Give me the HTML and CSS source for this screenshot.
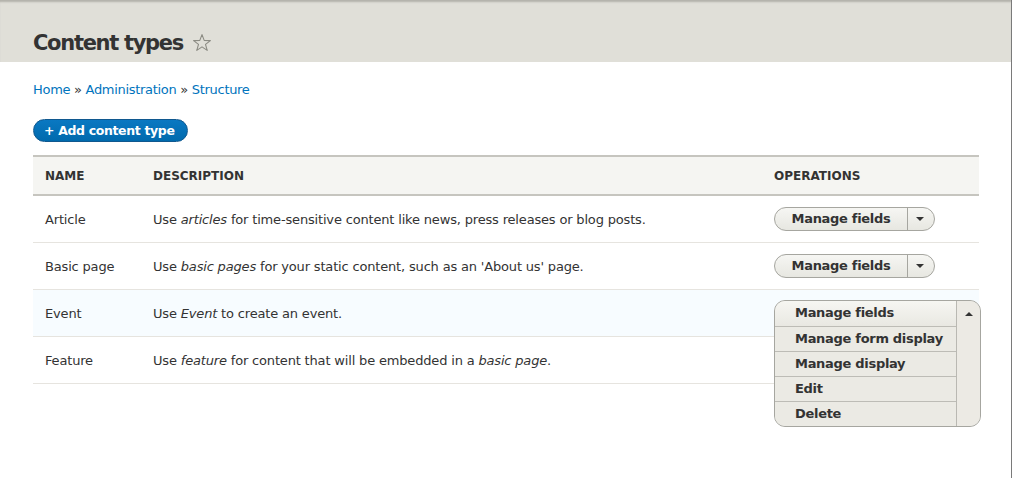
FILE: index.html
```html
<!DOCTYPE html>
<html>
<head>
<meta charset="utf-8">
<link rel="stylesheet" href="styles.css">
</head>
<body>
<div class="page">
  <header class="page-header">
    <h1 class="title">Content types <span class="star"><svg width="20" height="20" viewBox="0 0 20 20"><path d="M10 1.6 L12.2 7.4 L18.4 7.6 L13.5 11.4 L15.2 17.4 L10 13.9 L4.8 17.4 L6.5 11.4 L1.6 7.6 L7.8 7.4 Z" fill="none" stroke="#8b8b83" stroke-width="1.1" stroke-linejoin="round"/></svg></span></h1>
  </header>
  <main class="content">
    <nav class="breadcrumb"><a href="#">Home</a> » <a href="#">Administration</a> » <a href="#">Structure</a></nav>
    <div class="actions"><a class="btn-primary" href="#">+ Add content type</a></div>
    <table class="types">
      <thead>
        <tr><th class="c-name">Name</th><th class="c-desc">Description</th><th class="c-ops">Operations</th></tr>
      </thead>
      <tbody>
        <tr>
          <td>Article</td>
          <td>Use <em>articles</em> for time-sensitive content like news, press releases or blog posts.</td>
          <td><div class="dropbutton"><span class="db-main">Manage fields</span><span class="db-toggle"><i class="arrow-down"></i></span></div></td>
        </tr>
        <tr>
          <td>Basic page</td>
          <td>Use <em>basic pages</em> for your static content, such as an 'About us' page.</td>
          <td><div class="dropbutton"><span class="db-main">Manage fields</span><span class="db-toggle"><i class="arrow-down"></i></span></div></td>
        </tr>
        <tr class="hover">
          <td>Event</td>
          <td>Use <em>Event</em> to create an event.</td>
          <td class="ops-open">
            <div class="db-open">
              <ul class="db-list">
                <li>Manage fields</li>
                <li>Manage form display</li>
                <li>Manage display</li>
                <li>Edit</li>
                <li>Delete</li>
              </ul>
              <span class="db-open-toggle"><i class="arrow-up"></i></span>
            </div>
          </td>
        </tr>
        <tr>
          <td>Feature</td>
          <td>Use <em>feature</em> for content that will be embedded in a <em>basic page</em>.</td>
          <td></td>
        </tr>
      </tbody>
    </table>
  </main>
</div>
</body>
</html>
```
FILE: styles.css
```css
html, body {
  margin: 0;
  padding: 0;
  background: #fff;
}
body {
  font-family: "DejaVu Sans", Verdana, sans-serif;
  font-size: 13px;
  letter-spacing: -0.17px;
  color: #333;
  width: 1012px;
  height: 478px;
  overflow: hidden;
}
.page {
  border-right: 1px solid #7a7a7a;
  height: 478px;
  box-sizing: border-box;
}
.page-header {
  background: #e0dfd8;
  height: 62px;
  box-sizing: border-box;
  padding: 29px 0 0 33px;
  box-shadow: inset 0 3px 2px -1px #b3b2ab;
}
.title {
  margin: 0;
  font-size: 21px;
  font-weight: bold;
  color: #333;
  line-height: 28px;
  display: flex;
  align-items: center;
  letter-spacing: -1.3px;
}
.star {
  display: inline-flex;
  margin-left: 9px;
  margin-top: -1px;
}
.content {
  padding: 19px 33px 0 33px;
}
.breadcrumb {
  line-height: 18px;
  color: #333;
  letter-spacing: -0.3px;
}
.breadcrumb a {
  color: #0074bd;
  text-decoration: none;
}
.actions {
  margin-top: 20px;
  display: flex;
}
.btn-primary {
  display: inline-block;
  background: linear-gradient(#0a78c2, #006aad);
  color: #fff;
  font-weight: bold;
  text-decoration: none;
  font-size: 12.5px;
  letter-spacing: -0.35px;
  line-height: 19px;
  padding: 1px 12px 1px 10px;
  border: 1px solid #10588f;
  border-radius: 12px;
}
.types {
  margin-top: 13px;
  width: 946px;
  border-collapse: collapse;
}
.types thead tr {
  background: #f5f5f2;
  border-top: 2px solid #c6c5bf;
  border-bottom: 2px solid #c6c5bf;
}
.types th {
  text-align: left;
  font-size: 12px;
  font-weight: bold;
  text-transform: uppercase;
  height: 37px;
  padding: 0 12px;
  color: #333;
  letter-spacing: 0;
}
.c-name { width: 84px; }
.c-desc { width: 597px; }
.types tbody tr {
  border-bottom: 1px solid #e6e4df;
}
.types td {
  height: 46px;
  padding: 0 12px;
  vertical-align: middle;
}
.types em {
  font-style: italic;
}
.types tr.hover td {
  background: #f7fcff;
}
.dropbutton {
  display: inline-flex;
  height: 24px;
  border: 1px solid #a6a6a0;
  border-radius: 12px;
  background: linear-gradient(#f6f6f3, #e7e7e1);
  box-sizing: border-box;
  overflow: hidden;
}
.db-main {
  width: 132px;
  text-align: center;
  font-weight: bold;
  line-height: 22px;
  border-right: 1px solid #a6a6a0;
  color: #333;
  letter-spacing: -0.3px;
}
.db-toggle {
  width: 26px;
  display: flex;
  align-items: center;
  justify-content: center;
}
.arrow-down {
  width: 0; height: 0;
  border-left: 4px solid transparent;
  border-right: 4px solid transparent;
  border-top: 4px solid #333;
  margin-left: -3px;
}
.arrow-up {
  width: 0; height: 0;
  border-left: 4px solid transparent;
  border-right: 4px solid transparent;
  border-bottom: 4px solid #333;
}
.ops-open {
  position: relative;
}
.db-open {
  position: absolute;
  left: 12px;
  top: 10px;
  width: 207px;
  display: flex;
  border: 1px solid #a6a6a0;
  border-radius: 11px;
  background: #ebeae4;
  box-sizing: border-box;
  overflow: hidden;
  z-index: 2;
}
.db-list {
  list-style: none;
  margin: 0;
  padding: 0;
  width: 181px;
  border-right: 1px solid #b9b8b2;
}
.db-list li {
  height: 25px;
  line-height: 24px;
  box-sizing: border-box;
  padding-left: 20px;
  font-weight: bold;
  color: #333;
  border-top: 1px solid #bdbcb6;
  background: #ebeae4;
  letter-spacing: -0.3px;
}
.db-list li:first-child {
  border-top: none;
  height: 25px;
  background: linear-gradient(#f6f6f2, #e9e8e2);
}
.db-open-toggle {
  flex: 1;
  display: flex;
  justify-content: center;
  padding-top: 11px;
  background: #eceae4;
}
```
